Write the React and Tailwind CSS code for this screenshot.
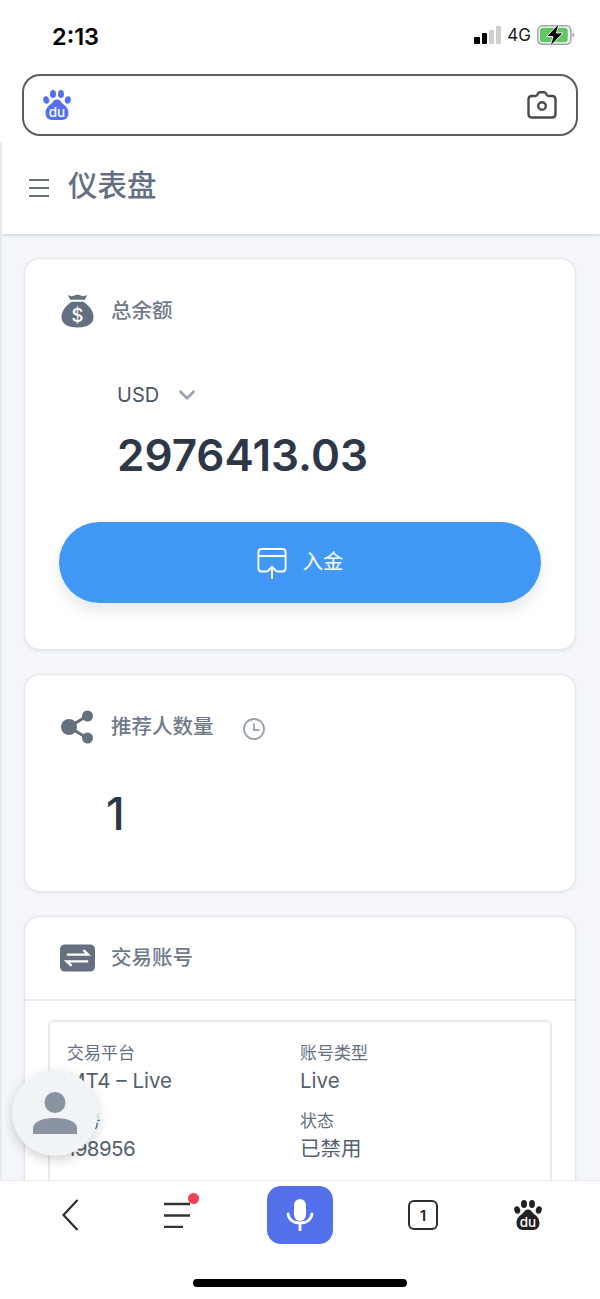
import { ChevronDown } from 'lucide-react';

const font = { fontFamily: 'Inter, "Noto Sans CJK SC", sans-serif' };

function Paw({ color = '#5470ea', duColor = '#fff', size = 28 }) {
  return (
    <svg width={size} height={size * 1.140} viewBox="0 0 28 32">
      <ellipse cx="10" cy="5" rx="3" ry="4" fill={color} />
      <ellipse cx="18" cy="5" rx="3" ry="4" fill={color} />
      <ellipse cx="3.200" cy="11" rx="3" ry="3.800" fill={color} transform="rotate(-15 3.200 11)" />
      <ellipse cx="24.800" cy="11" rx="3" ry="3.800" fill={color} transform="rotate(15 24.800 11)" />
      <path d="M14 10.500c3 0 4 2.500 5.500 4 3 2.500 6 4.500 6 9.500 0 4.500-3 7-6.500 7H9c-3.500 0-6.500-2.500-6.500-7 0-5 3-7 6-9.500 1.500-1.500 2.500-4 5.500-4z" fill={color} />
      <text x="14" y="28" textAnchor="middle" fontSize="13.500" fontWeight="500" fill={duColor} fontFamily="Inter, sans-serif">du</text>
    </svg>
  );
}

function StatusBar() {
  return (
    <div className="h-[74px] shrink-0 flex items-start justify-between pl-[52px] pr-[25px] pt-[21px]">
      <span className="text-[23.500px] leading-[32px] font-semibold text-black">2:13</span>
      <div className="flex items-center gap-[6px] pt-[2px]">
        <div className="flex items-end gap-[2px] h-[18px]">
          <div className="w-[6px] h-[7px] rounded-[1px] bg-black" />
          <div className="w-[5px] h-[11px] rounded-[1px] bg-black" />
          <div className="w-[5px] h-[14px] rounded-[1px] bg-[#cfcfcf]" />
          <div className="w-[5px] h-[18px] rounded-[1px] bg-[#cfcfcf]" />
        </div>
        <span className="text-[17px] leading-[20px] text-[#1a1a1a]">4G</span>
        <svg width="38" height="24" viewBox="0 0 38 24">
          <rect x="0.800" y="2.800" width="33" height="18.400" rx="4.500" fill="none" stroke="#a0a0a0" strokeWidth="1.500" />
          <rect x="2.800" y="4.800" width="28" height="14.400" rx="3" fill="#5fc764" />
          <path d="M35.500 9.500c1.300.5 1.800 1.300 1.800 2.500s-.5 2-1.800 2.500z" fill="#a0a0a0" />
          <path d="M22 0.500 9.500 13.500h6.500L13 23.500 26 10h-6.500z" fill="#000" stroke="#fff" strokeWidth="0.900" />
        </svg>
      </div>
    </div>
  );
}

function SearchBar() {
  return (
    <div className="h-[62px] mx-[22px] shrink-0 border-[2px] border-[#5c5c5c] rounded-[18px] flex items-center justify-between pl-[19px] pr-[19px] bg-white">
      <Paw />
      <svg width="30" height="32" viewBox="0 0 30 32" fill="none" stroke="#4a4a4a" strokeWidth="2.400">
        <path d="M5 7h3.500c1 0 1.500-.5 2-1.500l.5-1c.4-.8 1-1.300 2-1.300h4c1 0 1.600.5 2 1.300l.5 1c.5 1 1 1.500 2 1.500H25c2 0 3.500 1.500 3.500 3.500V25c0 2-1.500 3.500-3.500 3.500H5c-2 0-3.500-1.500-3.500-3.500V10.500C1.500 8.500 3 7 5 7z" />
        <circle cx="15" cy="17" r="3.800" />
      </svg>
    </div>
  );
}

function CardTitle({ icon, title, children }) {
  return (
    <div className="flex items-center">
      <div className="w-[36px] h-[36px] flex items-center justify-center shrink-0">{icon}</div>
      <span className="ml-[16px] text-[20.500px] leading-[28px] font-medium text-[#6f7a88]">{title}</span>
      {children}
    </div>
  );
}

function Field({ label, value, valueClass = '' }) {
  return (
    <div>
      <div className="text-[17px] leading-[24px] text-[#64707f]">{label}</div>
      <div className={`text-[20.500px] leading-[28px] text-[#55606e] mt-[2px] ${valueClass}`}>{value}</div>
    </div>
  );
}

export default function App() {
  return (
    <div className="relative w-[600px] h-[1299px] overflow-hidden bg-white flex flex-col" style={font}>
      <StatusBar />
      <SearchBar />

      <main className="flex-1 min-h-0 mt-[6px] overflow-hidden bg-[#f4f6f9] border-l-[2px] border-[#e7eaee]">
        {/* Header */}
        <header className="h-[92px] bg-white shadow-[0_2px_2px_rgba(120,135,155,0.22)] flex items-center pl-[27px]">
          <svg width="20" height="20" viewBox="0 0 20 20" stroke="#64707f" strokeWidth="2">
            <path d="M0 2h20M0 10h20M0 18h20" />
          </svg>
          <h1 className="ml-[19px] pb-[6px] text-[29.500px] leading-[40px] font-medium text-[#64707f]">仪表盘</h1>
        </header>

        <div className="-ml-[2px] px-[24px] pt-[24px] flex flex-col gap-[24px]">
          {/* Balance */}
          <section className="h-[392px] bg-white rounded-[16px] border-[1px] border-[#e2e6eb] shadow-[0_1px_3px_rgba(120,135,155,0.18)] pt-[34px] px-[34px]">
            <CardTitle
              title="总余额"
              icon={
                <svg width="33" height="36" viewBox="0 0 34 36">
                  <path d="M7 1.500c2 1 3.500 1.500 5 1l5-1.500 5 1.500c1.500.5 3 0 5-1l-2.500 5H9.500z" fill="#64707f" />
                  <path d="M11 8.500h12C29 12.500 33.500 18 33.500 24c0 7.500-6 11-16.500 11S.5 31.500.5 24C.5 18 5 12.500 11 8.500z" fill="#64707f" />
                  <text x="17" y="29" textAnchor="middle" fontSize="19" fontWeight="500" fill="#fff" fontFamily="Inter, sans-serif">$</text>
                </svg>
              }
            />
            <div className="pl-[58px] mt-[50px]">
              <div className="flex items-center h-[32px]">
                <span className="text-[20px] leading-[28px] text-[#4a5565]">USD</span>
                <ChevronDown className="ml-[15px] text-[#98a2b0]" size={26} strokeWidth={2.500} />
              </div>
              <div className="mt-[12px] text-[44px] leading-[64px] font-semibold text-[#2d3748]">2976413.03</div>
            </div>
            <button className="mt-[35px] w-full h-[81px] rounded-full bg-[#4299f5] shadow-[0_8px_14px_rgba(100,112,127,0.16)] flex items-center justify-center text-white">
              <svg width="30" height="32" viewBox="0 0 32 34" fill="none" stroke="#fff" strokeWidth="2" strokeLinecap="round" strokeLinejoin="round">
                <path d="M10 26H5c-2 0-3.500-1.500-3.500-3.500v-17C1.500 3.500 3 2 5 2h22c2 0 3.500 1.500 3.500 3.500v17c0 2-1.500 3.500-3.500 3.500h-5" />
                <path d="M1.500 9.500h29" />
                <path d="M16 33V21M11.500 25.500 16 21l4.500 4.500" />
              </svg>
              <span className="ml-[16px] pb-[1px] text-[20.500px] leading-[28px]">入金</span>
            </button>
          </section>

          {/* Referrals */}
          <section className="h-[218px] bg-white rounded-[16px] border-[1px] border-[#e2e6eb] shadow-[0_1px_3px_rgba(120,135,155,0.18)] pt-[34px] px-[34px]">
            <CardTitle
              title="推荐人数量"
              icon={
                <svg width="34" height="34" viewBox="0 0 34 34">
                  <path d="M27 6 9 17l18 11" fill="none" stroke="#64707f" strokeWidth="3" />
                  <circle cx="27.500" cy="6" r="5.500" fill="#64707f" />
                  <circle cx="9" cy="17" r="8" fill="#64707f" />
                  <circle cx="27.500" cy="28" r="5.500" fill="#64707f" />
                </svg>
              }
            >
              <svg className="ml-[28px] mt-[4px]" width="24" height="24" viewBox="0 0 24 24" fill="none" stroke="#98a2b0" strokeWidth="1.800">
                <circle cx="12" cy="12" r="10" />
                <path d="M12 6.500V13h5.500" />
              </svg>
            </CardTitle>
            <div className="pl-[47px] mt-[41px] text-[45px] leading-[56px] font-medium text-[#2d3748]">1</div>
          </section>

          {/* Trading accounts */}
          <section className="h-[400px] bg-white rounded-[16px] border-[1px] border-[#e2e6eb] shadow-[0_1px_3px_rgba(120,135,155,0.18)]">
            <div className="h-[84px] border-b-[2px] border-[#e7eaee] px-[34px] flex items-center">
              <CardTitle
                title="交易账号"
                icon={
                  <svg width="35" height="30" viewBox="0 0 36 30">
                    <rect width="36" height="28" y="1" rx="5" fill="#64707f" />
                    <path d="M7 11.500h22l-5-4.500M29 18.500H7l5 4.500" fill="none" stroke="#fff" strokeWidth="2.400" />
                  </svg>
                }
              />
            </div>
            <div className="mx-[23px] mt-[19px] h-[200px] border-[2px] border-[#e7eaee] rounded-[6px] pt-[19px] pl-[17px] grid grid-cols-[233px_1fr] gap-y-[14px] content-start">
              <Field label="交易平台" value="MT4 – Live" />
              <Field label="账号类型" value="Live" />
              <Field label="账号" value="198956" valueClass="tracking-[-0.6px]" />
              <Field label="状态" value="已禁用" />
            </div>
          </section>
        </div>
      </main>

      {/* Floating avatar */}
      <div className="absolute left-[12px] top-[1070px] w-[86px] h-[86px] rounded-full bg-[#f1f4f7] shadow-[0_4px_12px_rgba(0,0,0,0.18)] flex items-center justify-center">
        <svg width="44" height="42" viewBox="0 0 44 42" fill="#8a93a0">
          <circle cx="22" cy="10.500" r="10.500" />
          <path d="M0 42v-6c0-6 9-10 22-10s22 4 22 10v6z" />
        </svg>
      </div>

      {/* Bottom browser bar */}
      <nav className="relative h-[119px] shrink-0 bg-white border-t-[1px] border-[#e9ebee]">
        <div className="flex items-center pl-[62px] pt-[5px]">
          <svg width="17" height="32" viewBox="0 0 17 32" fill="none" stroke="#2b2b2b" strokeWidth="2.200" className="shrink-0">
            <path d="M15.500 1 1.500 16l14 15" />
          </svg>
          <div className="relative ml-[85px] shrink-0">
            <svg width="26" height="26" viewBox="0 0 26 26" stroke="#333" strokeWidth="2.500" className="block">
              <path d="M0 2h26M0 13.500h26M0 25h19" />
            </svg>
            <div className="absolute -top-[9px] left-[24px] w-[11px] h-[11px] rounded-full bg-[#ef4056]" />
          </div>
          <div className="ml-[77px] shrink-0 w-[66px] h-[58px] rounded-[14px] bg-[#5470ea] flex items-center justify-center">
            <svg width="28" height="32" viewBox="0 0 28 32" fill="none">
              <rect x="8" y="0" width="12" height="22" rx="6" fill="#fff" />
              <path d="M2 15c1 6 6 9 12 9s11-3 12-9" stroke="#fff" strokeWidth="2.800" strokeLinecap="round" />
              <path d="M14 24v8" stroke="#fff" strokeWidth="2.800" />
            </svg>
          </div>
          <div className="ml-[75px] shrink-0 w-[30px] h-[30px] rounded-[6px] border-[2px] border-[#2b2b2b] flex items-center justify-center text-[14px] font-bold text-[#2b2b2b]">1</div>
          <div className="ml-[76px] shrink-0"><Paw color="#222" /></div>
        </div>
        <div className="absolute left-[193px] top-[98px] w-[214px] h-[8px] rounded-full bg-black" />
      </nav>
    </div>
  );
}
